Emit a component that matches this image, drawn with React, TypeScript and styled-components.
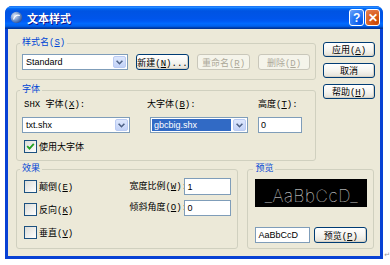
import React from "react";
import styled, { createGlobalStyle } from "styled-components";

const GlobalStyle = createGlobalStyle`
  html, body {
    margin: 0;
    padding: 0;
    background: #ffffff;
  }
  body {
    font-family: "Liberation Mono", "Noto Sans CJK SC", monospace;
    font-size: 9px;
    color: #000;
  }
`;

const Page = styled.div`
  width: 390px;
  box-sizing: border-box;
  padding: 6px 0 0 5px;
  display: flex;
  align-items: flex-end;
`;

const Window = styled.div`
  width: 379px;
  height: 253px;
  display: flex;
  flex-direction: column;
  background: #0841d4;
  border-radius: 7px 7px 0 0;
  overflow: hidden;
`;

const TitleBar = styled.div`
  height: 23px;
  flex: none;
  box-sizing: border-box;
  padding: 0 3px 0 5px;
  display: flex;
  align-items: center;
  background: linear-gradient(
    180deg,
    #0058ee 0%,
    #3593ff 4%,
    #288eff 6%,
    #127dff 8%,
    #036ffc 10%,
    #0262ee 14%,
    #0057e5 20%,
    #0054e3 24%,
    #0055eb 56%,
    #005bf5 66%,
    #026afe 76%,
    #0062ef 86%,
    #0052d6 92%,
    #0040ab 94%,
    #003092 100%
  );
`;

const Title = styled.span`
  margin-left: 4px;
  flex: 1;
  color: #fff;
  font-family: "Noto Sans CJK SC", sans-serif;
  font-weight: 700;
  font-size: 11px;
  text-shadow: 1px 1px 0 #0f1089;
`;

const TitleButton = styled.div<{ $close?: boolean }>`
  width: 15px;
  height: 17px;
  box-sizing: border-box;
  margin-left: 1px;
  border: 1px solid #fff;
  border-radius: 3px;
  display: flex;
  align-items: center;
  justify-content: center;
  color: #fff;
  font-family: "Liberation Sans", sans-serif;
  font-weight: 700;
  font-size: 12px;
  background: ${(p) =>
    p.$close
      ? "radial-gradient(circle at 80% 80%, #cc4600 0%, #dc6527 55%, #e8845a 100%)"
      : "radial-gradient(circle at 80% 80%, #0054e9 0%, #2f7cf6 55%, #76a6f7 100%)"};
`;

const Client = styled.div`
  flex: 1;
  margin: 0 3px 3px;
  background: #ece9d8;
  box-sizing: border-box;
  padding: 8px 6px 0 8px;
  display: flex;
  flex-direction: column;
`;

const TopRow = styled.div`
  display: flex;
  gap: 7px;
`;

const LeftCol = styled.div`
  width: 300px;
  display: flex;
  flex-direction: column;
  gap: 4px;
`;

const ButtonCol = styled.div`
  width: 52px;
  padding-top: 5px;
  display: flex;
  flex-direction: column;
  gap: 6px;
`;

const BottomRow = styled.div`
  margin-top: 2px;
  display: flex;
  gap: 9px;
`;

const Group = styled.fieldset<{ $w: number; $h: number; $pad: string }>`
  margin: 0;
  min-width: 0;
  width: ${(p) => p.$w}px;
  height: ${(p) => p.$h}px;
  box-sizing: border-box;
  border: 1px solid #d0d0bf;
  border-radius: 3px;
  padding: ${(p) => p.$pad};
`;

const Legend = styled.legend`
  color: #0046d5;
  padding: 0 2px;
  margin-left: -2px;
  font-size: 9px;
  line-height: 12px;
`;

const Row = styled.div<{ $gap: number }>`
  display: flex;
  align-items: center;
  gap: ${(p) => p.$gap}px;
`;

const Button = styled.button<{ $w: number; $h?: number }>`
  width: ${(p) => p.$w}px;
  height: ${(p) => p.$h ?? 15}px;
  padding: 0;
  box-sizing: border-box;
  font: inherit;
  color: #000;
  border: 1px solid #003c74;
  border-radius: 3px;
  background: linear-gradient(180deg, #ffffff 0%, #f5f4ef 55%, #e4e1d7 100%);
  box-shadow: inset -1px -1px 0 #d8d2c6;
  white-space: nowrap;
  &:disabled {
    color: #aca899;
    border-color: #c9c7ba;
    background: #f5f4ea;
    box-shadow: none;
  }
`;

const Combo = styled.div<{ $w: number }>`
  width: ${(p) => p.$w}px;
  height: 16px;
  box-sizing: border-box;
  border: 1px solid #7f9db9;
  background: #fff;
  display: flex;
  align-items: center;
`;

const ComboText = styled.span<{ $selected?: boolean }>`
  flex: 1;
  height: 12px;
  line-height: 12px;
  margin: 0 2px 0 1px;
  padding-left: 2px;
  white-space: nowrap;
  font-family: "Liberation Sans", sans-serif;
  background: ${(p) => (p.$selected ? "#316ac5" : "transparent")};
  color: ${(p) => (p.$selected ? "#fff" : "#000")};
`;

const DropButton = styled.span`
  width: 13px;
  height: 12px;
  margin-right: 1px;
  box-sizing: border-box;
  border: 1px solid #bacbf3;
  border-radius: 2px;
  background: linear-gradient(180deg, #dde7fd 0%, #c2d2f7 100%);
  display: flex;
  align-items: center;
  justify-content: center;
`;

const TextInput = styled.input<{ $w: number; $h?: number }>`
  width: ${(p) => p.$w}px;
  height: ${(p) => p.$h ?? 16}px;
  box-sizing: border-box;
  margin: 0;
  padding: 0 2px;
  border: 1px solid #7f9db9;
  background: #fff;
  font: 9px "Liberation Sans", sans-serif;
  color: #000;
  outline: none;
`;

const FontGrid = styled.div`
  display: grid;
  grid-template-columns: 128px 108px 44px;
  grid-template-rows: 12px 16px 13px;
  row-gap: 6px;
  align-items: center;
  & > :last-child {
    grid-column: 1 / -1;
    margin-top: 2px;
  }
`;

const Label = styled.span<{ $shift?: number }>`
  margin-left: ${(p) => p.$shift ?? 0}px;
  white-space: nowrap;
  line-height: 12px;
`;

const CheckRow = styled.label`
  display: flex;
  align-items: center;
  gap: 2px;
  height: 13px;
  margin-left: 2px;
  white-space: nowrap;
`;

const Box = styled.span`
  width: 13px;
  height: 13px;
  box-sizing: border-box;
  border: 1px solid #1c5180;
  background: linear-gradient(135deg, #dcdcd7 0%, #ffffff 100%);
  display: flex;
  align-items: center;
  justify-content: center;
`;

const EffectBody = styled.div`
  display: flex;
`;

const CheckCol = styled.div`
  width: 108px;
  padding-top: 5px;
  display: flex;
  flex-direction: column;
  gap: 10px;
`;

const FieldGrid = styled.div`
  padding-top: 3px;
  display: grid;
  grid-template-columns: 55px 47px;
  grid-template-rows: 17px 16px;
  row-gap: 5px;
  align-items: center;
`;

const PreviewPane = styled.div`
  width: 112px;
  height: 28px;
  margin-top: 4px;
  background: #000;
  color: #f4f4f4;
  display: flex;
  align-items: flex-end;
  justify-content: center;
  font-family: "Inter", "DejaVu Sans", sans-serif;
  font-weight: 100;
  font-size: 17px;
  line-height: 22px;
  letter-spacing: 0.6px;
  white-space: nowrap;
  overflow: hidden;
`;

const PreviewRow = styled.div`
  margin-top: 20px;
  display: flex;
  gap: 4px;
`;

const Mark = styled.span`
  margin: 0 0 0 1px;
  font-family: "DejaVu Sans", sans-serif;
  font-size: 7px;
  line-height: 7px;
  color: #9a9a9a;
`;

const Chevron = () => (
  <svg width="7" height="5" viewBox="0 0 7 5">
    <polyline points="0.6,0.8 3.5,3.7 6.4,0.8" fill="none" stroke="#4d6185" strokeWidth="1.6" />
  </svg>
);

const AppIcon = () => (
  <svg width="13" height="13" viewBox="0 0 13 13">
    <defs>
      <radialGradient id="ic" cx="35%" cy="35%" r="70%">
        <stop offset="0%" stopColor="#dfe8f7" />
        <stop offset="60%" stopColor="#6c8fc7" />
        <stop offset="100%" stopColor="#2b4f9a" />
      </radialGradient>
    </defs>
    <circle cx="6.5" cy="6.5" r="5.8" fill="url(#ic)" />
    <path d="M3.5 8.5 C4.5 4 8 3.5 9.8 4.6" fill="none" stroke="#ffffff" strokeWidth="1.2" />
  </svg>
);

const CheckMark = () => (
  <svg width="9" height="9" viewBox="0 0 9 9">
    <polyline points="1.2,4.2 3.5,6.6 7.8,1.8" fill="none" stroke="#21a121" strokeWidth="1.8" />
  </svg>
);

const Check = ({ checked, children }: { checked?: boolean; children: React.ReactNode }) => (
  <CheckRow>
    <Box>{checked && <CheckMark />}</Box>
    <span>{children}</span>
  </CheckRow>
);

const Select = ({ w, value, selected }: { w: number; value: string; selected?: boolean }) => (
  <Combo $w={w}>
    <ComboText $selected={selected}>{value}</ComboText>
    <DropButton>
      <Chevron />
    </DropButton>
  </Combo>
);

export default function App() {
  return (
    <>
      <GlobalStyle />
      <Page>
        <Window>
          <TitleBar>
            <AppIcon />
            <Title>文本样式</Title>
            <TitleButton>?</TitleButton>
            <TitleButton $close>✕</TitleButton>
          </TitleBar>
          <Client>
            <TopRow>
              <LeftCol>
                <Group $w={300} $h={43} $pad="5px 5px 0 5px">
                  <Legend>
                    样式名(<u>S</u>)
                  </Legend>
                  <Row $gap={8}>
                    <Select w={106} value="Standard" />
                    <Button $w={53} $h={16}>
                      新建(<u>N</u>)...
                    </Button>
                    <Button $w={53} $h={16} disabled>
                      重命名(<u>R</u>)
                    </Button>
                    <Button $w={52} $h={16} disabled>
                      删除(<u>D</u>)
                    </Button>
                  </Row>
                </Group>
                <Group $w={300} $h={77} $pad="3px 5px 0 5px">
                  <Legend>字体</Legend>
                  <FontGrid>
                    <Label $shift={2}>
                      SHX 字体(<u>X</u>):
                    </Label>
                    <Label $shift={-3}>
                      大字体(<u>B</u>):
                    </Label>
                    <Label>
                      高度(<u>T</u>):
                    </Label>
                    <Select w={108} value="txt.shx" />
                    <Select w={98} value="gbcbig.shx" selected />
                    <TextInput $w={44} readOnly value="0" />
                    <Check checked>使用大字体</Check>
                  </FontGrid>
                </Group>
              </LeftCol>
              <ButtonCol>
                <Button $w={52}>
                  应用(<u>A</u>)
                </Button>
                <Button $w={52}>取消</Button>
                <Button $w={52}>
                  帮助(<u>H</u>)
                </Button>
              </ButtonCol>
            </TopRow>
            <BottomRow>
              <Group $w={223} $h={86} $pad="0 6px 0 5px">
                <Legend>效果</Legend>
                <EffectBody>
                  <CheckCol>
                    <Check>
                      颠倒(<u>E</u>)
                    </Check>
                    <Check>
                      反向(<u>K</u>)
                    </Check>
                    <Check>
                      垂直(<u>V</u>)
                    </Check>
                  </CheckCol>
                  <FieldGrid>
                    <Label>
                      宽度比例(<u>W</u>):
                    </Label>
                    <TextInput $w={47} $h={17} readOnly value="1" />
                    <Label>
                      倾斜角度(<u>O</u>):
                    </Label>
                    <TextInput $w={47} readOnly value="0" />
                  </FieldGrid>
                </EffectBody>
              </Group>
              <Group $w={127} $h={86} $pad="0 6px 0 7px">
                <Legend>预览</Legend>
                <PreviewPane>_AaBbCcD_</PreviewPane>
                <PreviewRow>
                  <TextInput $w={55} readOnly value="AaBbCcD" />
                  <Button $w={53} $h={16}>
                    预览(<u>P</u>)
                  </Button>
                </PreviewRow>
              </Group>
            </BottomRow>
          </Client>
        </Window>
        <Mark>↵</Mark>
      </Page>
    </>
  );
}
